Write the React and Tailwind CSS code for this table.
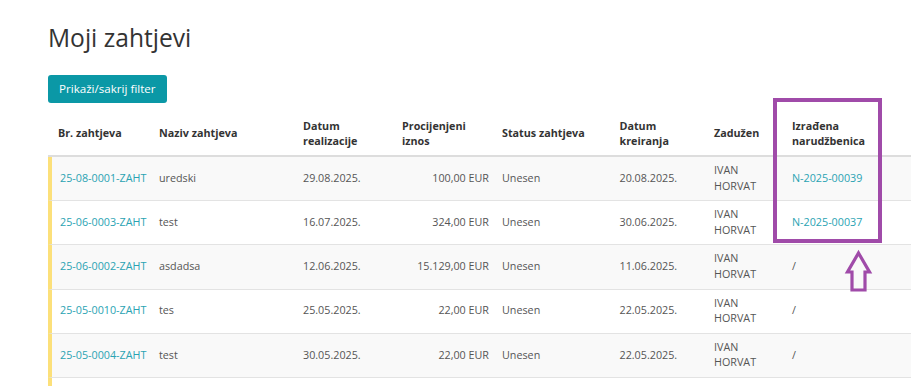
import React from "react";

const rows = [
  { id: "25-08-0001-ZAHT", name: "uredski", real: "29.08.2025.", amt: "100,00 EUR", status: "Unesen", created: "20.08.2025.", order: "N-2025-00039" },
  { id: "25-06-0003-ZAHT", name: "test", real: "16.07.2025.", amt: "324,00 EUR", status: "Unesen", created: "30.06.2025.", order: "N-2025-00037" },
  { id: "25-06-0002-ZAHT", name: "asdadsa", real: "12.06.2025.", amt: "15.129,00 EUR", status: "Unesen", created: "11.06.2025.", order: null },
  { id: "25-05-0010-ZAHT", name: "tes", real: "25.05.2025.", amt: "22,00 EUR", status: "Unesen", created: "22.05.2025.", order: null },
  { id: "25-05-0004-ZAHT", name: "test", real: "30.05.2025.", amt: "22,00 EUR", status: "Unesen", created: "22.05.2025.", order: null },
];

export default function App() {
  return (
    <div
      className="relative h-[390px] w-[911px] overflow-hidden bg-white text-[#555]"
      style={{ fontFamily: '"Open Sans", "Noto Sans", sans-serif' }}
    >
      <div className="pl-[48px] pt-[22px]">
        <h1 className="text-[24.6px] leading-[32px] font-normal text-[#333]">Moji zahtjevi</h1>
        <button className="mt-[21px] h-[28px] rounded-[3px] bg-[#0b98a6] px-[11px] text-[11.6px] text-white">
          Prikaži/sakrij filter
        </button>

        <div className="mt-[10px] text-[10.75px]">
          {/* header */}
          <div className="flex h-[44px] items-center border-b-2 border-[#dddddd] font-bold leading-[15.5px] text-[#333]">
            <div className="w-[101px] shrink-0 pl-[10px]">Br. zahtjeva</div>
            <div className="w-[144px] shrink-0 pl-[10px]">Naziv zahtjeva</div>
            <div className="w-[99px] shrink-0 pl-[10px]">Datum<br />realizacije</div>
            <div className="w-[100px] shrink-0 pl-[10px]">Procijenjeni<br />iznos</div>
            <div className="w-[117.5px] shrink-0 pl-[10px]">Status zahtjeva</div>
            <div className="w-[94.5px] shrink-0 pl-[10px]">Datum<br />kreiranja</div>
            <div className="w-[78px] shrink-0 pl-[10px]">Zadužen</div>
            <div className="flex-1 pl-[10px]">Izrađena<br />narudžbenica</div>
          </div>
          {rows.map((r, i) => (
            <div
              key={r.id}
              className={`flex h-[44.2px] items-center border-b border-l-4 border-b-[#e3e3e3] border-l-[#fce07a] leading-[15.5px] ${i % 2 === 0 ? "bg-[#f9f9f9]" : "bg-white"}`}
            >
              <div className="w-[97px] shrink-0 pl-[8px] text-[#2aa3b3]">{r.id}</div>
              <div className="w-[144px] shrink-0 pl-[10px]">{r.name}</div>
              <div className="w-[99px] shrink-0 pl-[10px]">{r.real}</div>
              <div className="w-[100px] shrink-0 pr-[3px] text-right">{r.amt}</div>
              <div className="w-[117.5px] shrink-0 pl-[10px]">{r.status}</div>
              <div className="w-[94.5px] shrink-0 pl-[10px]">{r.created}</div>
              <div className="w-[78px] shrink-0 pl-[10px]">IVAN<br />HORVAT</div>
              <div className="flex-1 pl-[10px]">
                {r.order ? <span className="text-[#2aa3b3]">{r.order}</span> : "/"}
              </div>
            </div>
          ))}
          <div className="h-[8px] border-l-4 border-l-[#fce07a] bg-white" />
        </div>
      </div>

      {/* highlight box */}
      <div className="absolute left-[773px] top-[98px] h-[145px] w-[109px] border-4 border-[#a04ba9]" />
      {/* arrow */}
      <svg className="absolute left-[840px] top-[245px]" width="40" height="52" viewBox="840 245 40 52">
        <polygon
          points="858.5,253 869.5,272 865,272 865,290 852,290 852,272 847.5,272"
          fill="none"
          stroke="#a04ba9"
          strokeWidth="3.2"
          strokeLinejoin="miter"
        />
      </svg>
    </div>
  );
}
